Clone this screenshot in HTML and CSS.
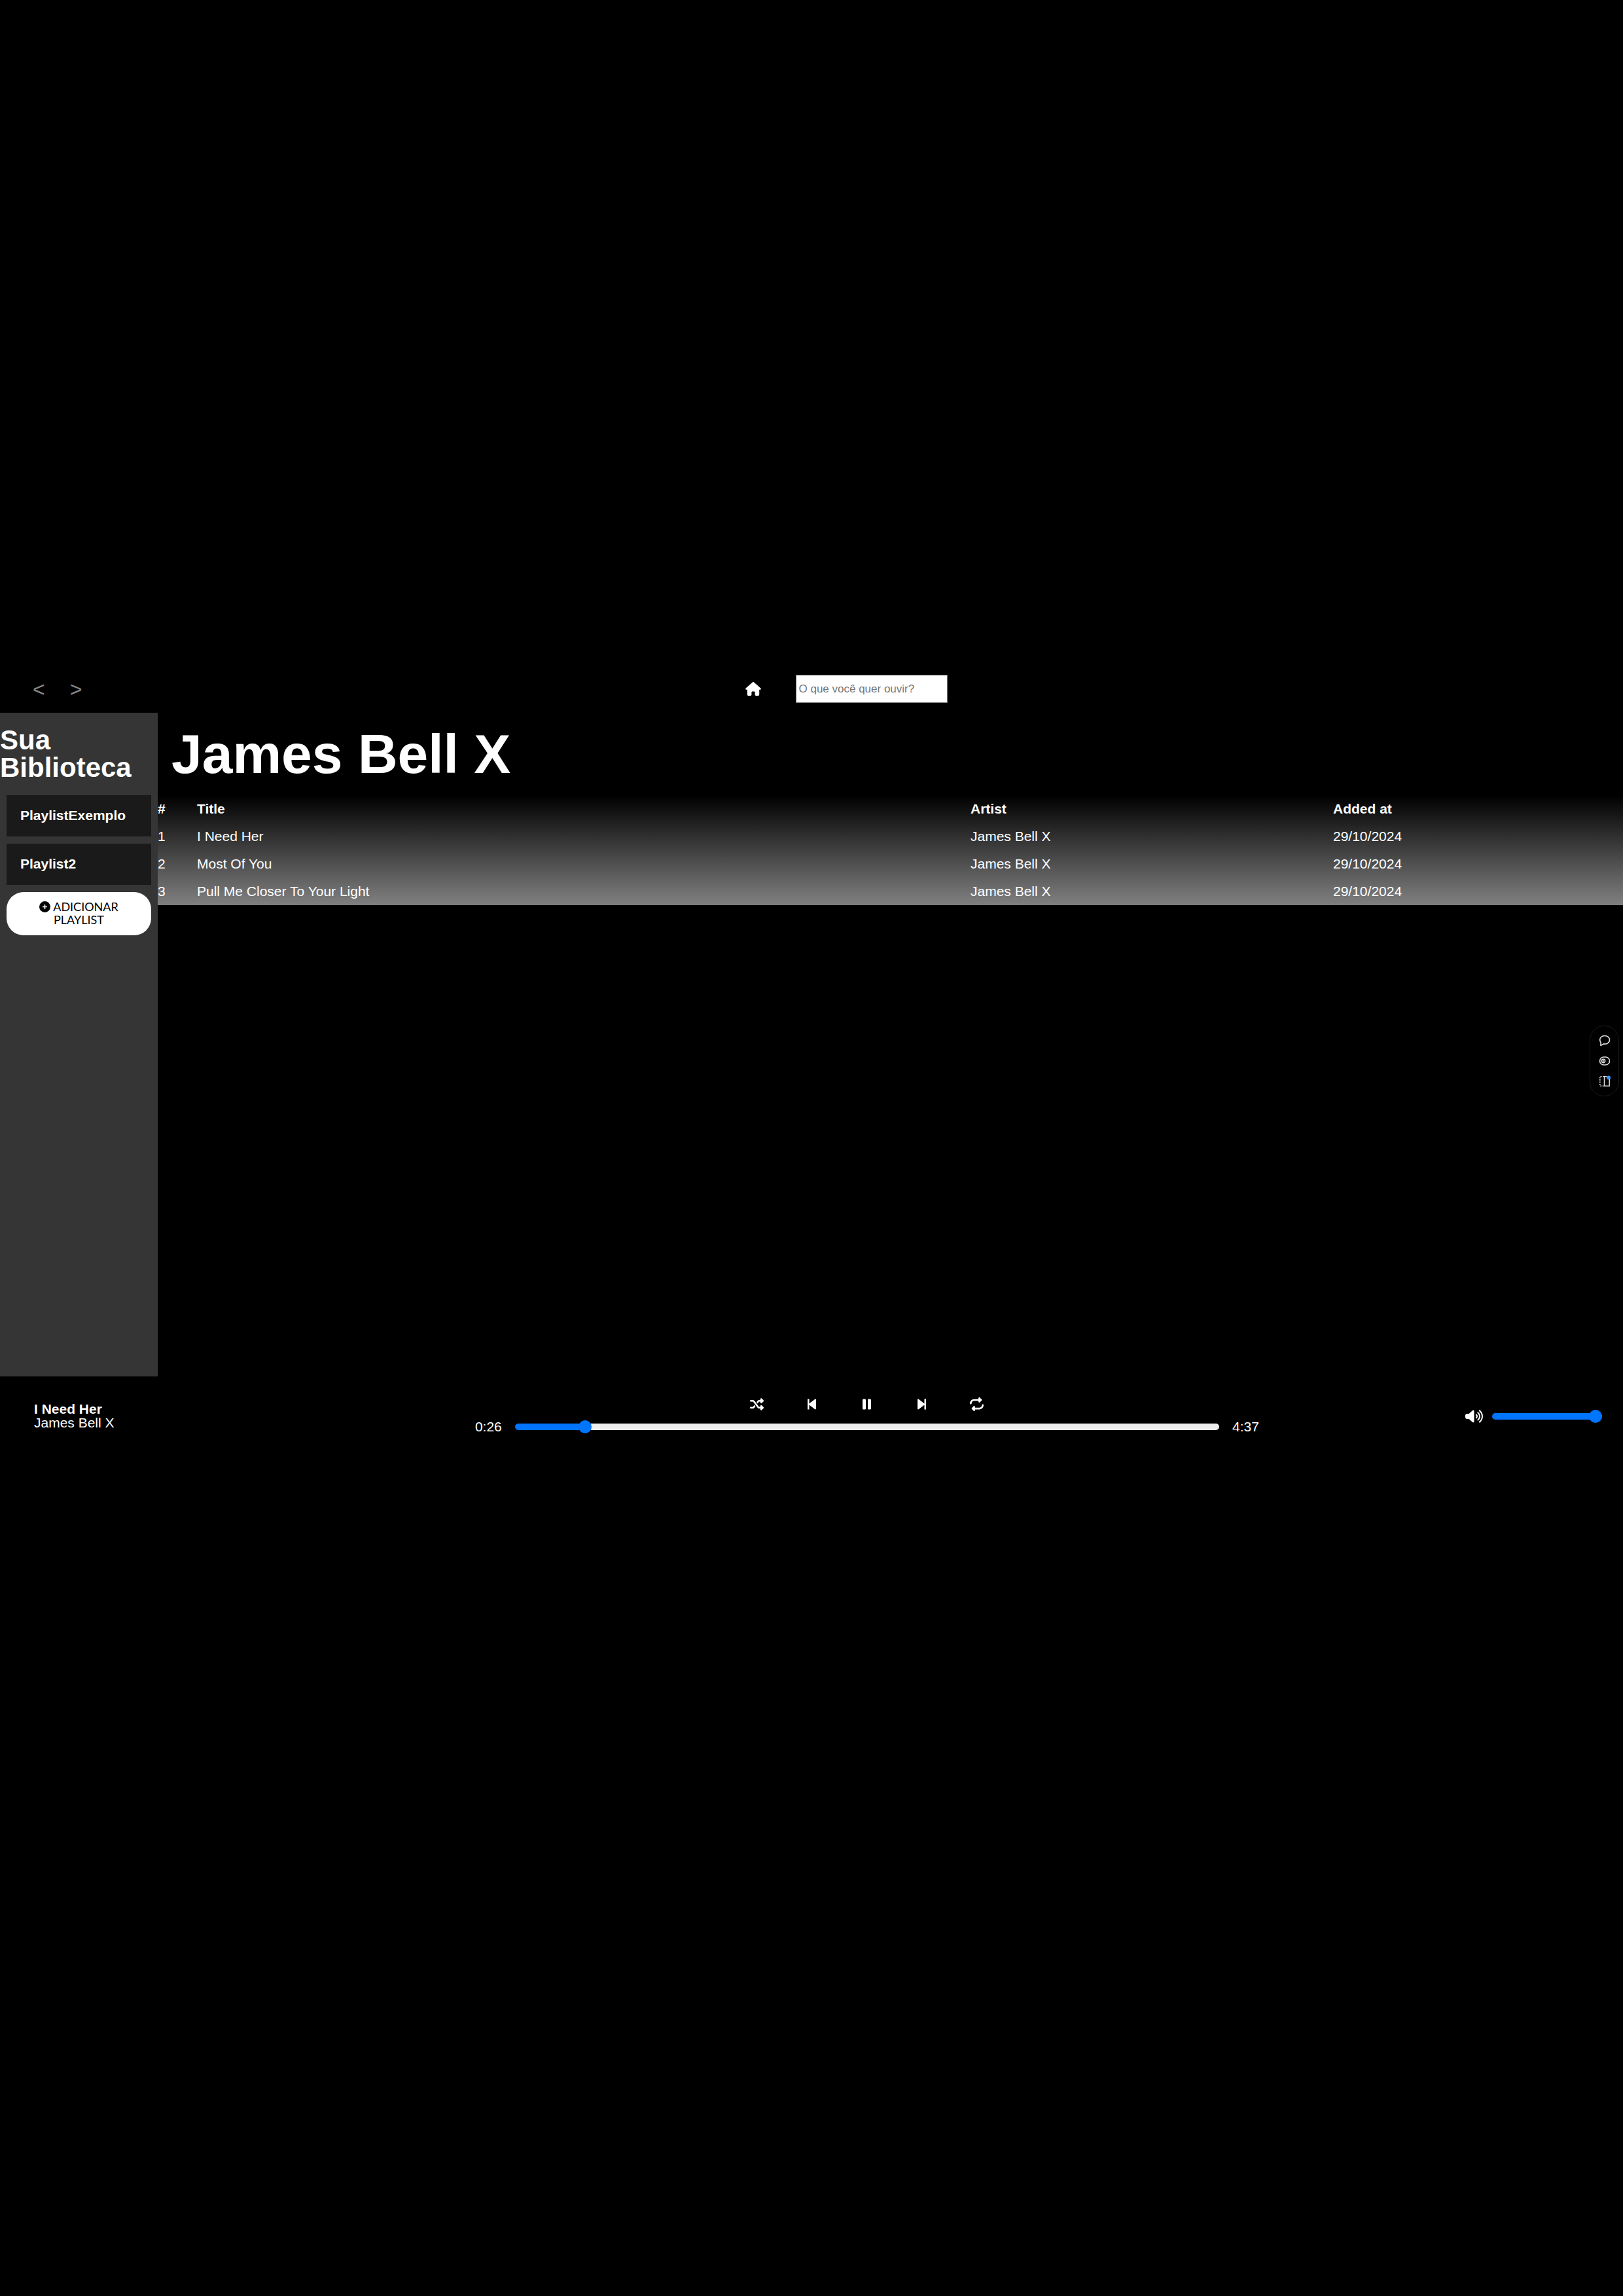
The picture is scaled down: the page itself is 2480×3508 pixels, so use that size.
FILE: index.html
```html
<!DOCTYPE html>
<html lang="pt-BR">
<head>
<meta charset="utf-8">
<meta name="viewport" content="width=device-width, initial-scale=1">
<title>James Bell X</title>
<link rel="stylesheet" href="styles.css">
</head>
<body>
<header class="topbar">
  <nav class="history">
    <button class="history-btn" type="button" aria-label="Voltar">&lt;</button>
    <button class="history-btn" type="button" aria-label="Avançar">&gt;</button>
  </nav>
  <div class="search">
    <a class="home" href="#" aria-label="Início">
      <svg class="home-icon" viewBox="0 0 576 512" fill="currentColor"><path d="M575.8 255.5c0 18-15 32.1-32 32.1l-32 0 .7 160.2c0 2.7-.2 5.4-.5 8.1l0 16.2c0 22.1-17.9 40-40 40l-16 0c-1.1 0-2.2 0-3.3-.1c-1.4 .1-2.8 .1-4.2 .1L416 512l-24 0c-22.1 0-40-17.9-40-40l0-24 0-64c0-17.7-14.3-32-32-32l-64 0c-17.7 0-32 14.3-32 32l0 64 0 24c0 22.1-17.9 40-40 40l-24 0-31.9 0c-1.5 0-3-.1-4.5-.2c-1.2 .1-2.4 .2-3.6 .2l-16 0c-22.1 0-40-17.9-40-40l0-112c0-.9 0-1.9 .1-2.8l0-69.7-32 0c-18 0-32-14-32-32.1c0-9 3-17 10-24L266.4 8c7-7 15-8 22-8s15 2 21 7L564.8 231.5c8 7 12 15 11 24z"/></svg>
    </a>
    <input class="search-input" type="text" placeholder="O que você quer ouvir?" aria-label="O que você quer ouvir?">
  </div>
</header>

<div class="content">
  <aside class="library">
    <h2 class="library-title">Sua Biblioteca</h2>
    <ul class="playlists">
      <li><a class="playlist" href="#">PlaylistExemplo</a></li>
      <li><a class="playlist" href="#">Playlist2</a></li>
    </ul>
    <button class="add-playlist" type="button">
      <svg class="add-icon" viewBox="0 0 512 512" fill="currentColor"><path d="M256 512A256 256 0 1 0 256 0a256 256 0 1 0 0 512zM232 344V280H168c-13.300 0-24-10.700-24-24s10.700-24 24-24h64V168c0-13.300 10.700-24 24-24s24 10.700 24 24v64h64c13.300 0 24 10.700 24 24s-10.700 24-24 24H280v64c0 13.300-10.700 24-24 24s-24-10.700-24-24z"/></svg>
      ADICIONAR PLAYLIST
    </button>
  </aside>
  <main class="artist">
    <h1 class="artist-name">James Bell X</h1>
    <table class="tracks">
      <thead>
        <tr><th class="col-num">#</th><th class="col-title">Title</th><th class="col-artist">Artist</th><th>Added at</th></tr>
      </thead>
      <tbody>
        <tr><td>1</td><td>I Need Her</td><td>James Bell X</td><td>29/10/2024</td></tr>
        <tr><td>2</td><td>Most Of You</td><td>James Bell X</td><td>29/10/2024</td></tr>
        <tr><td>3</td><td>Pull Me Closer To Your Light</td><td>James Bell X</td><td>29/10/2024</td></tr>
      </tbody>
    </table>
  </main>
</div>

<footer class="player">
  <div class="now-playing">
    <strong>I Need Her</strong>
    <span>James Bell X</span>
  </div>
  <div class="playback">
    <div class="controls">
      <button class="control" type="button" aria-label="Aleatório">
        <svg class="control-icon" viewBox="0 0 512 512" fill="currentColor"><path d="M403.800 34.400c12-5 25.700-2.200 34.900 6.900l64 64c6 6 9.400 14.100 9.400 22.600s-3.400 16.600-9.400 22.600l-64 64c-9.200 9.200-22.900 11.900-34.900 6.900s-19.800-16.600-19.800-29.600V160H352c-10.100 0-19.600 4.700-25.600 12.800L284 229.300 244 176l31.200-41.600C293.300 110.200 321.800 96 352 96h32V64c0-12.900 7.800-24.600 19.800-29.600zM164 282.700L204 336l-31.200 41.600C154.700 401.800 126.200 416 96 416H32c-17.700 0-32-14.300-32-32s14.300-32 32-32H96c10.100 0 19.600-4.700 25.600-12.800L164 282.700zm274.600 188c-9.200 9.200-22.900 11.900-34.900 6.900s-19.800-16.600-19.800-29.600V416H352c-30.200 0-58.700-14.200-76.800-38.400L121.600 172.800c-6-8.100-15.500-12.800-25.600-12.800H32c-17.700 0-32-14.300-32-32s14.300-32 32-32H96c30.200 0 58.700 14.200 76.800 38.400L326.400 339.200c6 8.100 15.500 12.800 25.600 12.800h32V320c0-12.900 7.800-24.600 19.800-29.600s25.700-2.200 34.900 6.900l64 64c6 6 9.400 14.100 9.400 22.600s-3.400 16.600-9.400 22.600l-64 64z"/></svg>
      </button>
      <button class="control" type="button" aria-label="Anterior">
        <svg class="control-icon" viewBox="0 0 21 21" fill="currentColor"><path d="M4 2.500h2.500v7L15 2.900c1-.8 2-.3 2 .8v13.600c0 1.100-1 1.600-2 .8l-8.500-6.600v7H4z"/></svg>
      </button>
      <button class="control" type="button" aria-label="Pausar">
        <svg class="control-icon" viewBox="0 0 21 21" fill="currentColor"><rect x="4" y="2.500" width="5" height="16" rx="1.500"/><rect x="12" y="2.500" width="5" height="16" rx="1.500"/></svg>
      </button>
      <button class="control" type="button" aria-label="Próxima">
        <svg class="control-icon" viewBox="0 0 21 21" fill="currentColor"><path d="M17 2.500h-2.500v7L6 2.900c-1-.8-2-.3-2 .8v13.600c0 1.100 1 1.600 2 .8l8.500-6.600v7H17z"/></svg>
      </button>
      <button class="control" type="button" aria-label="Repetir">
        <svg class="control-icon" viewBox="0 0 512 512" fill="currentColor"><path d="M0 224c0 17.700 14.300 32 32 32s32-14.300 32-32c0-53 43-96 96-96H320v32c0 12.900 7.800 24.600 19.800 29.600s25.700 2.200 34.900-6.900l64-64c12.500-12.500 12.500-32.800 0-45.300l-64-64c-9.200-9.200-22.900-11.900-34.900-6.900S320 19.100 320 32V64H160C71.600 64 0 135.600 0 224zm512 64c0-17.700-14.300-32-32-32s-32 14.300-32 32c0 53-43 96-96 96H192V352c0-12.900-7.800-24.600-19.800-29.600s-25.700-2.200-34.900 6.900l-64 64c-12.500 12.500-12.500 32.800 0 45.300l64 64c9.200 9.200 22.900 11.900 34.900 6.900s19.800-16.600 19.800-29.600V448H352c88.400 0 160-71.600 160-160z"/></svg>
      </button>
    </div>
    <div class="progress">
      <span>0:26</span>
      <input class="slider progress-slider" type="range" min="0" max="1000" value="92" aria-label="Progresso" style="--fill: 10%">
      <span>4:37</span>
    </div>
  </div>
  <div class="volume">
    <svg class="volume-icon" viewBox="0 0 640 512" fill="currentColor"><path d="M533.600 32.500C598.500 85.200 640 165.800 640 256s-41.500 170.700-106.400 223.500c-10.300 8.400-25.400 6.800-33.800-3.500s-6.800-25.400 3.500-33.800C557.500 398.200 592 331.200 592 256s-34.500-142.200-88.700-186.300c-10.300-8.400-11.800-23.500-3.500-33.800s23.500-11.800 33.800-3.500zM473.100 107c43.200 35.200 70.900 88.900 70.900 149s-27.700 113.800-70.900 149c-10.300 8.400-25.400 6.800-33.800-3.500s-6.800-25.400 3.500-33.800C475.300 341.300 496 301.100 496 256s-20.700-85.300-53.200-111.800c-10.300-8.400-11.800-23.500-3.500-33.800s23.500-11.800 33.800-3.500zm-60.500 74.500C434.100 199.100 448 225.900 448 256s-13.900 56.900-35.400 74.500c-10.300 8.400-25.400 6.800-33.800-3.500s-6.800-25.400 3.500-33.800C393.100 284.400 400 271 400 256s-6.900-28.400-17.700-37.300c-10.300-8.400-11.800-23.500-3.500-33.800s23.500-11.800 33.800-3.500zM301.100 34.800C312.600 40 320 51.400 320 64V448c0 12.600-7.400 24-18.900 29.200s-25 3.100-34.400-5.300L131.800 352H64c-35.300 0-64-28.700-64-64V224c0-35.300 28.700-64 64-64h67.800L266.700 40.100c9.400-8.400 22.900-10.400 34.400-5.300z"/></svg>
    <input class="slider volume-slider" type="range" min="0" max="100" value="100" aria-label="Volume" style="--fill: 100%">
  </div>
</footer>

<div class="side-tools">
  <button class="tool" type="button" aria-label="Conversa">
    <svg class="tool-icon" viewBox="0 0 18 18" fill="none" stroke="#ddd" stroke-width="1.600"><path d="M3 16.500V11.600C-.5 6.500 3.500 1.500 9.300 1.500c4 0 7.200 2.800 7.200 6.200 0 4.200-4.400 7.300-9 6.200z" stroke-linejoin="round"/></svg>
  </button>
  <button class="tool" type="button" aria-label="Alternar">
    <svg class="tool-icon" viewBox="0 0 18 18" fill="none" stroke="#ddd" stroke-width="1.600"><rect x="1.500" y="3" width="15" height="12" rx="6"/><circle cx="7" cy="9" r="2.600"/><path d="M7 8v2"/></svg>
  </button>
  <button class="tool" type="button" aria-label="Painel">
    <svg class="tool-icon" viewBox="0 0 18 18" fill="none" stroke="#ddd" stroke-width="1.500"><path d="M8 1.800H1.800v14.400H8" stroke-dasharray="2 1.500"/><path d="M12 1.800H8.500v14.400h7.700V6"/><circle cx="15" cy="3.500" r="3" fill="#3b96ff" stroke="none"/></svg>
  </button>
</div>
</body>
</html>
```

FILE: styles.css
```css
* {
  box-sizing: border-box;
  margin: 0;
  padding: 0;
}

body {
  min-height: 100vh;
  padding-top: 1016px;
  background: #000;
  color: #fff;
  font: 21px/1 "Liberation Sans", Arial, sans-serif;
}

button {
  border: 0;
  background: none;
  color: inherit;
  font: inherit;
}

a {
  color: inherit;
  text-decoration: none;
}

svg {
  display: block;
}

.topbar {
  display: grid;
  grid-template-columns: 1fr auto 1fr;
  align-items: center;
  height: 73px;
  padding: 0 50px;
}

.history {
  display: flex;
  gap: 38px;
}

.history-btn {
  color: #888;
  font-size: 32px;
}

.search {
  display: flex;
  align-items: center;
  gap: 53px;
  padding-left: 106px;
}

.home-icon {
  width: 24px;
  height: 21px;
}

.search-input {
  width: 232px;
  height: 43px;
  padding: 0 4px;
  border: 1px solid #767676;
  background: #fff;
  color: #000;
  font: 17px "Liberation Sans", Arial, sans-serif;
}

.search-input::placeholder {
  color: #757575;
}

.content {
  display: flex;
  min-height: 1014px;
}

.library {
  display: flex;
  flex-direction: column;
  gap: 21px;
  width: 241px;
  padding-top: 21px;
  background: #353535;
}

.library-title {
  font-size: 42px;
}

.playlists {
  display: grid;
  gap: 11px;
  margin: 0 10px;
  list-style: none;
}

.playlist {
  display: block;
  padding: 20px 21px 22px;
  background: #1a1a1a;
  font-weight: bold;
}

.add-playlist {
  margin: -10px 10px 0;
  padding: 12px 21px 14px;
  border-radius: 26px;
  background: #fff;
  color: #000;
  font: 18px/20px Lato, sans-serif;
}

.add-icon {
  display: inline-block;
  width: 17px;
  height: 17px;
  vertical-align: -2px;
}

.artist {
  flex: 1;
}

.artist-name {
  padding: 21px;
  font-size: 84px;
}

.tracks {
  width: 100%;
  table-layout: fixed;
  border-collapse: collapse;
  background: linear-gradient(#000, #808080);
  text-align: left;
}

.tracks th,
.tracks td {
  height: 42px;
  padding-bottom: 2px;
}

.col-num {
  width: 60px;
}

.col-title {
  width: 1182px;
}

.col-artist {
  width: 554px;
}

.player {
  display: grid;
  grid-template-columns: 9fr 16fr 7fr;
  height: 121px;
  padding: 0 32px 0 52px;
}

.now-playing {
  display: flex;
  flex-direction: column;
  align-self: center;
  padding-bottom: 2px;
}

.playback {
  display: flex;
  flex-direction: column;
  gap: 13px;
  padding-top: 32px;
}

.controls {
  display: flex;
  justify-content: center;
  gap: 63px;
}

.control-icon {
  width: 21px;
  height: 21px;
}

.progress {
  display: flex;
  align-items: center;
  gap: 20px;
}

.slider {
  height: 21px;
  appearance: none;
  background: none;
}

.slider::-webkit-slider-runnable-track {
  height: 10px;
  border-radius: 5px;
  background: linear-gradient(#0075ff, #0075ff) 0 / var(--fill) 100% no-repeat #efefef;
}

.slider::-webkit-slider-thumb {
  width: 20px;
  height: 20px;
  margin-top: -5px;
  appearance: none;
  border-radius: 50%;
  background: #0075ff;
}

.progress-slider {
  flex: 1;
}

.volume {
  display: flex;
  align-items: center;
  justify-content: flex-end;
  gap: 14px;
}

.volume-icon {
  width: 27px;
  height: 24px;
}

.volume-slider {
  width: 168px;
}

.side-tools {
  position: fixed;
  top: 1567px;
  right: 6px;
  display: flex;
  flex-direction: column;
  align-items: center;
  justify-content: space-around;
  width: 45px;
  height: 108px;
  padding: 6px 0;
  border: 1px solid #1a1a1a;
  border-radius: 22px;
  background: #000;
}

.tool-icon {
  width: 18px;
  height: 18px;
}
```
